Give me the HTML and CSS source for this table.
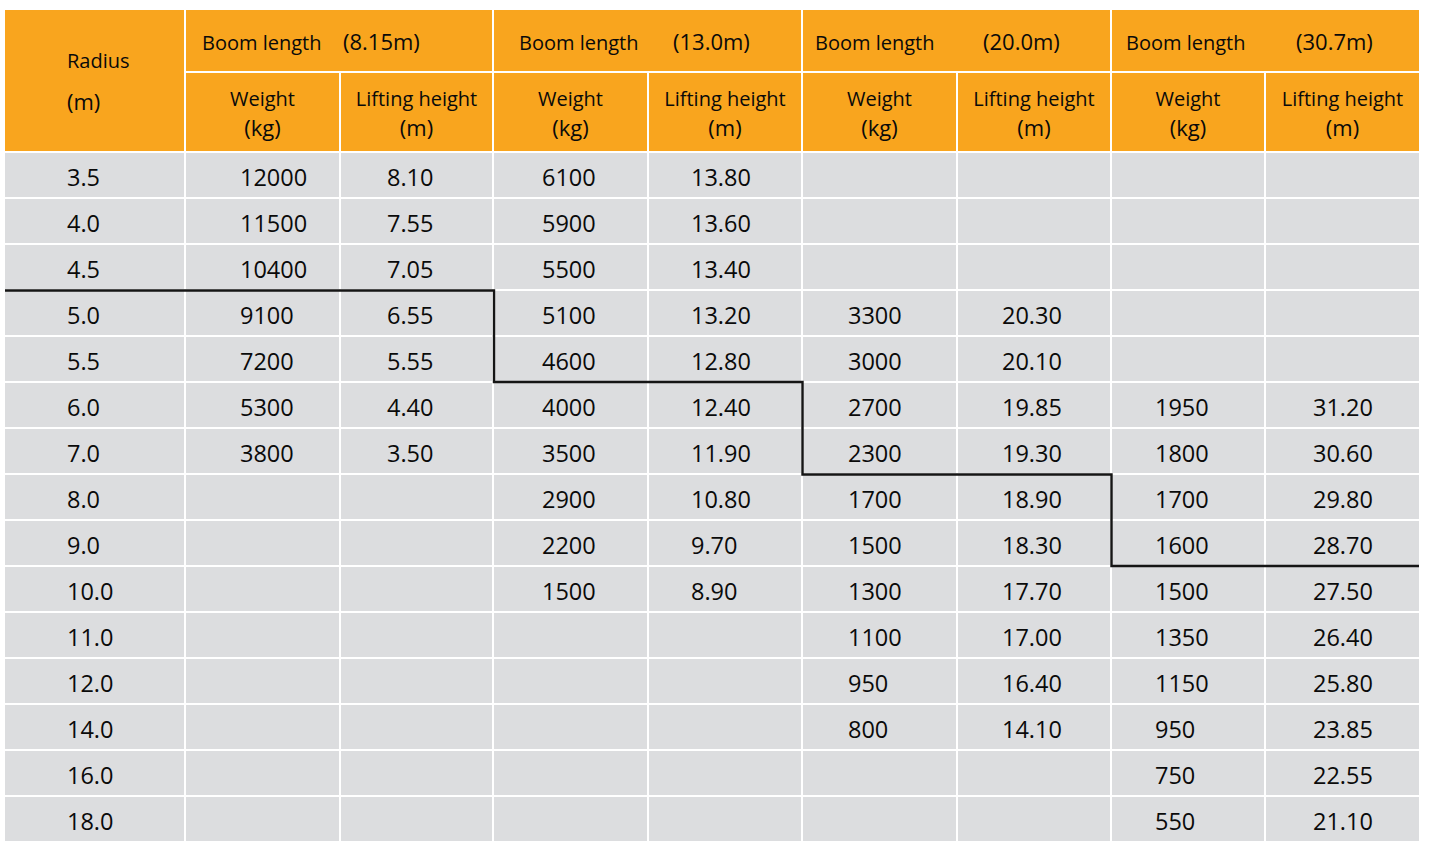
FILE: index.html
```html
<!DOCTYPE html>
<html lang="en">
<head>
<meta charset="utf-8">
<title>Load chart</title>
<link rel="stylesheet" href="styles.css">
</head>
<body>
<div class="wrap">
<table class="chart">
  <colgroup>
    <col class="c0"><col class="c1"><col class="c2"><col class="c3"><col class="c4"><col class="c5"><col class="c6"><col class="c7"><col class="c8">
  </colgroup>
  <thead>
    <tr class="hr1">
      <th rowspan="2" class="radius">Radius<br><span class="unit">(m)</span></th>
      <th colspan="2" class="boom b1"><span class="lbl">Boom length</span><span class="unit">(8.15m)</span></th>
      <th colspan="2" class="boom b2"><span class="lbl">Boom length</span><span class="unit">(13.0m)</span></th>
      <th colspan="2" class="boom b3"><span class="lbl">Boom length</span><span class="unit">(20.0m)</span></th>
      <th colspan="2" class="boom b4"><span class="lbl">Boom length</span><span class="unit">(30.7m)</span></th>
    </tr>
    <tr class="hr2">
      <th class="sub">Weight<br><span class="unit">(kg)</span></th><th class="sub">Lifting height<br><span class="unit">(m)</span></th>
      <th class="sub">Weight<br><span class="unit">(kg)</span></th><th class="sub">Lifting height<br><span class="unit">(m)</span></th>
      <th class="sub">Weight<br><span class="unit">(kg)</span></th><th class="sub">Lifting height<br><span class="unit">(m)</span></th>
      <th class="sub">Weight<br><span class="unit">(kg)</span></th><th class="sub">Lifting height<br><span class="unit">(m)</span></th>
    </tr>
  </thead>
  <tbody>
    <tr><td>3.5</td><td>12000</td><td>8.10</td><td>6100</td><td>13.80</td><td></td><td></td><td></td><td></td></tr>
    <tr><td>4.0</td><td>11500</td><td>7.55</td><td>5900</td><td>13.60</td><td></td><td></td><td></td><td></td></tr>
    <tr><td>4.5</td><td>10400</td><td>7.05</td><td>5500</td><td>13.40</td><td></td><td></td><td></td><td></td></tr>
    <tr><td>5.0</td><td>9100</td><td>6.55</td><td>5100</td><td>13.20</td><td>3300</td><td>20.30</td><td></td><td></td></tr>
    <tr><td>5.5</td><td>7200</td><td>5.55</td><td>4600</td><td>12.80</td><td>3000</td><td>20.10</td><td></td><td></td></tr>
    <tr><td>6.0</td><td>5300</td><td>4.40</td><td>4000</td><td>12.40</td><td>2700</td><td>19.85</td><td>1950</td><td>31.20</td></tr>
    <tr><td>7.0</td><td>3800</td><td>3.50</td><td>3500</td><td>11.90</td><td>2300</td><td>19.30</td><td>1800</td><td>30.60</td></tr>
    <tr><td>8.0</td><td></td><td></td><td>2900</td><td>10.80</td><td>1700</td><td>18.90</td><td>1700</td><td>29.80</td></tr>
    <tr><td>9.0</td><td></td><td></td><td>2200</td><td>9.70</td><td>1500</td><td>18.30</td><td>1600</td><td>28.70</td></tr>
    <tr><td>10.0</td><td></td><td></td><td>1500</td><td>8.90</td><td>1300</td><td>17.70</td><td>1500</td><td>27.50</td></tr>
    <tr><td>11.0</td><td></td><td></td><td></td><td></td><td>1100</td><td>17.00</td><td>1350</td><td>26.40</td></tr>
    <tr><td>12.0</td><td></td><td></td><td></td><td></td><td>950</td><td>16.40</td><td>1150</td><td>25.80</td></tr>
    <tr><td>14.0</td><td></td><td></td><td></td><td></td><td>800</td><td>14.10</td><td>950</td><td>23.85</td></tr>
    <tr><td>16.0</td><td></td><td></td><td></td><td></td><td></td><td></td><td>750</td><td>22.55</td></tr>
    <tr><td>18.0</td><td></td><td></td><td></td><td></td><td></td><td></td><td>550</td><td>21.10</td></tr>
  </tbody>
</table>
<svg class="steps" width="1440" height="861" viewBox="0 0 1440 861" aria-hidden="true">
  <polyline points="5,290.5 494,290.5 494,382 802.5,382 802.5,474.5 1111.5,474.5 1111.5,566 1419,566" fill="none" stroke="#151515" stroke-width="2.4"/>
</svg>
</div>
</body>
</html>
```

FILE: styles.css
```css
html, body {
  margin: 0;
  padding: 0;
  background: #ffffff;
}

.wrap {
  position: relative;
  width: 1440px;
  height: 861px;
  padding: 8px 0 0 3px;
  box-sizing: border-box;
}

.chart {
  table-layout: fixed;
  border-collapse: separate;
  border-spacing: 2px;
  width: 1418px;
  background: #ffffff;
  font-family: "Open Sans", "Noto Sans", sans-serif;
  color: #0a0a0a;
}

.c0 { width: 179px; }
.c1 { width: 153px; }
.c2 { width: 151px; }
.c3 { width: 153px; }
.c4 { width: 152px; }
.c5 { width: 153px; }
.c6 { width: 152px; }
.c7 { width: 152px; }
.c8 { width: 153px; }

.chart th {
  background: #f9a51e;
  font-weight: 400;
  font-size: 20px;
  padding: 0;
  vertical-align: middle;
}

.unit { font-size: 22px; }

.hr1 { height: 61px; }
.hr2 { height: 78px; }

.radius {
  text-align: left;
  padding-left: 62px !important;
  line-height: 40px;
  padding-top: 2px !important;
}

.boom {
  text-align: left;
  white-space: nowrap;
  line-height: 26px;
  padding-top: 3px !important;
}

.boom .lbl { display: inline-block; }
.b1 { padding-left: 16px !important; }
.b1 .lbl { width: 141px; }
.b2 { padding-left: 25px !important; }
.b2 .lbl { width: 154px; }
.b3 { padding-left: 12px !important; }
.b3 .lbl { width: 168px; }
.b4 { padding-left: 14px !important; }
.b4 .lbl { width: 170px; }

.sub {
  text-align: center;
  line-height: 29px;
  padding-top: 2px !important;
}

.chart td {
  background: #dcdddf;
  height: 44px;
  padding: 3px 0 0 0;
  box-sizing: border-box;
  font-size: 23.5px;
  line-height: 30px;
  text-align: left;
  vertical-align: middle;
}

.chart td:nth-child(1) { padding-left: 62px; }
.chart td:nth-child(2) { padding-left: 54px; }
.chart td:nth-child(3) { padding-left: 46px; }
.chart td:nth-child(4) { padding-left: 48px; }
.chart td:nth-child(5) { padding-left: 42px; }
.chart td:nth-child(6) { padding-left: 45px; }
.chart td:nth-child(7) { padding-left: 44px; }
.chart td:nth-child(8) { padding-left: 43px; }
.chart td:nth-child(9) { padding-left: 47px; }

.steps {
  position: absolute;
  left: 0;
  top: 0;
  pointer-events: none;
}
```
